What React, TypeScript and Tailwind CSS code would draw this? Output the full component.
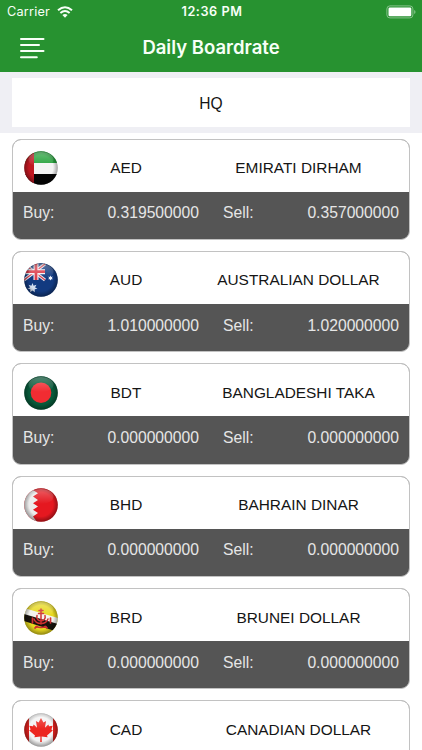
import React from 'react';

type Rate = { code: string; name: string; buy?: string; sell?: string };

const rates: Rate[] = [
  { code: 'AED', name: 'EMIRATI DIRHAM', buy: '0.319500000', sell: '0.357000000' },
  { code: 'AUD', name: 'AUSTRALIAN DOLLAR', buy: '1.010000000', sell: '1.020000000' },
  { code: 'BDT', name: 'BANGLADESHI TAKA', buy: '0.000000000', sell: '0.000000000' },
  { code: 'BHD', name: 'BAHRAIN DINAR', buy: '0.000000000', sell: '0.000000000' },
  { code: 'BRD', name: 'BRUNEI DOLLAR', buy: '0.000000000', sell: '0.000000000' },
  { code: 'CAD', name: 'CANADIAN DOLLAR' },
];

const artwork: Record<string, React.ReactNode> = {
  AED: (
    <>
      <rect width="34" height="34" fill="#f4f4f4" />
      <rect width="34" height="12" fill="#26a23c" />
      <rect y="23" width="34" height="11" fill="#050505" />
      <rect width="10" height="34" fill="#c01822" />
    </>
  ),
  AUD: (
    <>
      <rect width="34" height="34" fill="#123a80" />
      <path d="M0 1 21 17M21 1 0 17" stroke="#e8eaf2" strokeWidth="3.2" />
      <path d="M0 1 21 17M21 1 0 17" stroke="#d8404c" strokeWidth="1.2" />
      <path d="M12 0V17M0 8.7H21" stroke="#f4f4f8" strokeWidth="5" />
      <path d="M12 0V17M0 8.7H21" stroke="#dc3a48" strokeWidth="2.8" />
      <path d="m8.5 20 1.1 2.7 2.8-.9-1.3 2.6 2.4 1.4-2.8.5.1 2.9-2.3-1.8-2.3 1.8.1-2.9-2.8-.5 2.5-1.4-1.4-2.6 2.8.9z" fill="#d3deee" />
      <path d="m26.5 12.5.7 1.4 1.6-.3-.9 1.4.9 1.3-1.6-.1-.7 1.4-.7-1.4-1.6.1.9-1.3-.9-1.4 1.6.3z" fill="#f1f4fb" />
    </>
  ),
  BDT: (
    <>
      <rect width="34" height="34" fill="#075a3a" />
      <circle cx="17" cy="16.8" r="10.3" fill="#f12c32" />
    </>
  ),
  BHD: (
    <>
      <rect width="34" height="34" fill="#e51820" />
      <path d="M0 0H11L9 2l5 3.3L9 8.6l5 3.3-5 3.3 5 3.3-5 3.3 5 3.3-5 3.3 4 5.5H0z" fill="#ececec" />
    </>
  ),
  BRD: (
    <>
      <rect width="34" height="34" fill="#e8d91f" />
      <path d="M0 7 34 17V26L0 14z" fill="#f4f4ef" />
      <path d="M0 13 34 23V31L0 20z" fill="#17130d" />
      <g fill="none" stroke="#cf3030" strokeLinecap="round">
        <path d="M17 8V23M15 9.5H19M14.5 12.5H19.5" strokeWidth="1.5" />
        <path d="M13 14.5c-2 7 10 7 8 0M10 18c2 6 12 6 14 0M12 25.5q5 2 10 0" strokeWidth="1.5" />
        <path d="M8.5 17v5M26.5 17v5M11 27l2-1.5M23 27l-2-1.5" strokeWidth="1.7" />
      </g>
    </>
  ),
  CAD: (
    <>
      <rect width="34" height="34" fill="#f3f3f3" />
      <rect width="5" height="34" fill="#dc211e" />
      <rect x="29" width="5" height="34" fill="#dc211e" />
      <path d="m17 5 2.4 4.5 2.7-1.4-1.2 6.6 3.4-3.3.8 1.9 3.6-.6-1.3 3.8 1.4 1-5.8 5 .6 1.8-6-.8.2 5.5h-1.6l.2-5.5-6 .8.6-1.8-5.8-5 1.4-1-1.3-3.8 3.6.6.8-1.9 3.4 3.3-1.2-6.6 2.7 1.4z" fill="#ec2720" />
    </>
  ),
};

function Flag({ code }: { code: string }) {
  return (
    <svg viewBox="0 0 34 34" className="h-[34px] w-[34px] shrink-0" aria-label={code}>
      <defs>
        <clipPath id={`c-${code}`}><circle cx="17" cy="17" r="16.8" /></clipPath>
        <radialGradient id={`s-${code}`} cx=".5" cy=".48" r=".52">
          <stop offset=".68" stopColor="#000" stopOpacity="0" />
          <stop offset="1" stopColor="#000" stopOpacity=".4" />
        </radialGradient>
        <linearGradient id={`g-${code}`} x2="0" y2="1">
          <stop stopColor="#fff" stopOpacity=".3" />
          <stop offset="1" stopColor="#fff" stopOpacity="0" />
        </linearGradient>
      </defs>
      <g clipPath={`url(#c-${code})`}>
        {artwork[code]}
        <rect width="34" height="34" fill={`url(#s-${code})`} />
        <ellipse cx="17" cy="8.5" rx="12.5" ry="7.5" fill={`url(#g-${code})`} />
      </g>
    </svg>
  );
}

function RateCard({ rate }: { rate: Rate }) {
  return (
    <article className="h-[101.4px] shrink-0 overflow-hidden rounded-[9px] border border-[#c2c2c2] bg-[#555]">
      <div className="flex h-[52px] items-center bg-white pl-[11px] pt-[5px] text-[15.4px] text-[#151515]">
        <Flag code={rate.code} />
        <span className="ml-[37px] w-[62px] pb-px text-center">{rate.code}</span>
        <span className="ml-[41px] w-[201px] whitespace-nowrap pb-px text-center">{rate.name}</span>
      </div>
      {rate.buy && rate.sell && (
        <div className="flex h-[43px] items-center pl-[10px] pr-[10px] text-[15.7px] text-[#e6e6e6]">
          <span className="w-[50px]">Buy:</span>
          <span className="w-[126px] text-right">{rate.buy}</span>
          <span className="ml-[24px] w-[50px]">Sell:</span>
          <span className="flex-1 text-right">{rate.sell}</span>
        </div>
      )}
    </article>
  );
}

export default function App() {
  return (
    <main className="flex h-[750px] w-[422px] flex-col overflow-hidden bg-white font-['Liberation_Sans',sans-serif]">
      <header className="h-[72px] shrink-0 bg-[#279230] font-['Inter',sans-serif] text-[#f7fff7]">
        <div className="grid h-6 grid-cols-3 items-center pl-[7px] pr-[6px]">
          <div className="flex items-center gap-[7px] text-[12.7px] tracking-[0.2px]">
            <span>Carrier</span>
            <svg viewBox="0 0 16 12" className="h-3 w-4" fill="none" stroke="currentColor" strokeWidth="2">
              <path d="M1 4.3Q8-1.8 15 4.3M3.4 6.9Q8 3 12.6 6.9" />
              <path d="M5.4 9Q8 7 10.6 9L8 11.8z" fill="currentColor" stroke="none" />
            </svg>
          </div>
          <span className="whitespace-nowrap pl-px text-center text-[12.7px] font-semibold tracking-[0.55px]">12:36 PM</span>
          <svg viewBox="0 0 30 14" className="h-[14px] w-[30px] justify-self-end">
            <rect x=".9" y=".9" width="26" height="12" rx="3" fill="none" stroke="#86c38b" />
            <rect x="2.5" y="2.5" width="22.8" height="8.8" rx="1.3" fill="white" />
            <path d="M28.2 5v4q1.3-.6 1.3-2t-1.3-2z" fill="#86c38b" />
          </svg>
        </div>
        <div className="flex h-12 items-center pb-px">
          <svg viewBox="0 0 26 24" className="ml-[19px] h-6 w-[26px]" stroke="currentColor" strokeWidth="2" strokeLinecap="round">
            <path d="M2 2.9H24.5M2 9H20M2 15.1H24.5M2 21.2H17.8" />
          </svg>
          <h1 className="ml-[65.5px] w-[201px] text-center text-[18.5px] font-semibold">Daily Boardrate</h1>
        </div>
      </header>
      <section className="h-[60.5px] shrink-0 bg-[#efeff4] px-3 pt-[6px]">
        <div className="flex h-[49px] items-center justify-center bg-white pt-[2px] text-[15.6px] text-[#151515]">HQ</div>
      </section>
      <section className="flex flex-col gap-[11px] px-3 pt-[6px]">
        {rates.map((rate) => <RateCard key={rate.code} rate={rate} />)}
      </section>
    </main>
  );
}
